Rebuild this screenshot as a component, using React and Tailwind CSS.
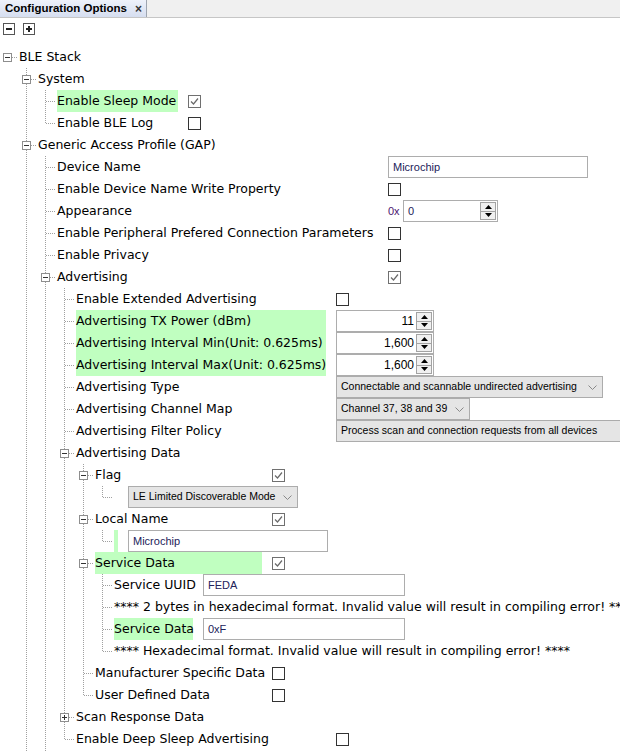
import React from 'react';

const LABEL = "font-['DejaVu_Sans',sans-serif] text-[12.5px] text-black";
const FIELD = "font-['Liberation_Sans',Arial,sans-serif] text-[11px] text-[#22225a]";
const COMBO = "font-['Liberation_Sans',Arial,sans-serif] text-[10.5px] text-black";

// one 19px indent cell of the tree, drawn as dotted connectors
function Conn({ type }) {
  const dot = { stroke: '#a0a0a0', strokeWidth: 1, strokeDasharray: '1 1' };
  return (
    <svg width="19" height="22" className="shrink-0 block">
      {type === 'l' && <line x1="7.5" y1="0" x2="7.5" y2="22" {...dot} />}
      {type === 't' && (
        <>
          <line x1="7.5" y1="0" x2="7.5" y2="22" {...dot} />
          <line x1="8" y1="11.5" x2="18" y2="11.5" {...dot} />
        </>
      )}
      {type === 'c' && (
        <>
          <line x1="7.5" y1="0" x2="7.5" y2="12" {...dot} />
          <line x1="8" y1="11.5" x2="18" y2="11.5" {...dot} />
        </>
      )}
      {(type === 'm' || type === 'p' || type === 'root') && (
        <>
          {type !== 'root' && <line x1="7.5" y1="0" x2="7.5" y2="7" {...dot} />}
          {type !== 'root' && <line x1="7.5" y1="16" x2="7.5" y2="22" {...dot} />}
          <line x1="12" y1="11.5" x2="18" y2="11.5" {...dot} />
          <rect x="3.5" y="7.5" width="8" height="8" fill="#fff" stroke="#8e8e8e" />
          <line x1="5" y1="11.5" x2="10" y2="11.5" stroke="#333" />
          {type === 'p' && <line x1="7.5" y1="9" x2="7.5" y2="14" stroke="#333" />}
        </>
      )}
    </svg>
  );
}

function Check({ on }) {
  return (
    <div className={`w-[13px] h-[13px] bg-white border ${on ? 'border-[#707070]' : 'border-[#333]'}`}>
      {on && (
        <svg width="11" height="11" className="block">
          <polyline points="2,5.5 4.5,8 9,2.5" fill="none" stroke="#6a6a6a" strokeWidth="1.2" />
        </svg>
      )}
    </div>
  );
}

function TextBox({ w, value }) {
  return (
    <div className={`${w} h-[22px] border border-[#adadad] bg-white flex items-center pl-[4px] ${FIELD}`}>
      {value}
    </div>
  );
}

function Arrows() {
  return (
    <div className="w-[16px] h-[18px] mr-[1px] flex flex-col border border-[#a3a3a3] bg-[#f0f0f0]">
      <div className="flex-1 flex items-center justify-center border-b border-[#a3a3a3]">
        <svg width="7" height="4" className="block"><polygon points="3.5,0 7,4 0,4" fill="#000" /></svg>
      </div>
      <div className="flex-1 flex items-center justify-center">
        <svg width="7" height="4" className="block"><polygon points="0,0 7,0 3.5,4" fill="#000" /></svg>
      </div>
    </div>
  );
}

function Spin({ w, value, right }) {
  return (
    <div className={`${w} h-[22px] border border-[#adadad] bg-white flex items-center`}>
      <span
        className={`flex-1 pl-[4px] pr-[2px] ${
          right
            ? "text-right font-['Liberation_Sans',Arial,sans-serif] text-[12px] text-black"
            : FIELD
        }`}
      >
        {value}
      </span>
      <Arrows />
    </div>
  );
}

function Combo({ w, value }) {
  return (
    <div className={`${w} h-[22px] shrink-0 border border-[#acacac] bg-[#e5e5e5] flex items-center pl-[4px] pr-[5px] ${COMBO}`}>
      <span className="flex-1 whitespace-nowrap">{value}</span>
      <svg width="9" height="5" className="block shrink-0">
        <polyline points="0.5,0.5 4.5,4.5 8.5,0.5" fill="none" stroke="#888" />
      </svg>
    </div>
  );
}

const E = 'e', L = 'l';

const rows = [
  { a: [], o: 'root', t: 'BLE Stack' },
  { a: [E], o: 'm', t: 'System' },
  { a: [E, L], o: 't', t: 'Enable Sleep Mode', w: 'w-[121px]', g: true, v: <Check on /> },
  { a: [E, L], o: 'c', t: 'Enable BLE Log', w: 'w-[121px]', v: <Check /> },
  { a: [E], o: 'm', t: 'Generic Access Profile (GAP)' },
  { a: [E, L], o: 't', t: 'Device Name', w: 'w-[321px]', v: <TextBox w="w-[200px]" value="Microchip" /> },
  { a: [E, L], o: 't', t: 'Enable Device Name Write Property', w: 'w-[321px]', v: <Check /> },
  {
    a: [E, L], o: 't', t: 'Appearance', w: 'w-[321px]',
    v: (
      <div className="flex items-center">
        <span className="w-[15px] font-['Liberation_Sans',sans-serif] text-[11px] text-[#4b1470]">0x</span>
        <Spin w="w-[95px]" value="0" />
      </div>
    ),
  },
  { a: [E, L], o: 't', t: 'Enable Peripheral Prefered Connection Parameters', w: 'w-[321px]', v: <Check /> },
  { a: [E, L], o: 't', t: 'Enable Privacy', w: 'w-[321px]', v: <Check /> },
  { a: [E, L], o: 'm', t: 'Advertising', w: 'w-[321px]', v: <Check on /> },
  { a: [E, L, L], o: 't', t: 'Enable Extended Advertising', w: 'w-[250px]', v: <Check /> },
  { a: [E, L, L], o: 't', t: 'Advertising TX Power (dBm)', w: 'w-[250px]', g: true, v: <Spin w="w-[98px]" value="11" right /> },
  { a: [E, L, L], o: 't', t: 'Advertising Interval Min(Unit: 0.625ms)', w: 'w-[250px]', g: true, v: <Spin w="w-[98px]" value="1,600" right /> },
  { a: [E, L, L], o: 't', t: 'Advertising Interval Max(Unit: 0.625ms)', w: 'w-[250px]', g: true, v: <Spin w="w-[98px]" value="1,600" right /> },
  { a: [E, L, L], o: 't', t: 'Advertising Type', w: 'w-[250px]', v: <Combo w="w-[267px]" value="Connectable and scannable undirected advertising" /> },
  { a: [E, L, L], o: 't', t: 'Advertising Channel Map', w: 'w-[250px]', v: <Combo w="w-[134px]" value="Channel 37, 38 and 39" /> },
  { a: [E, L, L], o: 't', t: 'Advertising Filter Policy', w: 'w-[250px]', v: <Combo w="w-[320px]" value="Process scan and connection requests from all devices" /> },
  { a: [E, L, L], o: 'm', t: 'Advertising Data' },
  { a: [E, L, L, L], o: 'm', t: 'Flag', w: 'w-[167px]', v: <Check on /> },
  { a: [E, L, L, L, L], o: 'c', t: '', w: 'w-[4px]', v: <Combo w="w-[170px]" value="LE Limited Discoverable Mode" /> },
  { a: [E, L, L, L], o: 'm', t: 'Local Name', w: 'w-[167px]', v: <Check on /> },
  { a: [E, L, L, L, L], o: 'c', t: '', w: 'w-[4px]', g: true, v: <TextBox w="w-[200px]" value="Microchip" /> },
  { a: [E, L, L, L], o: 'm', t: 'Service Data', w: 'w-[167px]', g: true, v: <Check on /> },
  { a: [E, L, L, L, L], o: 't', t: 'Service UUID', w: 'w-[79px]', v: <TextBox w="w-[202px]" value="FEDA" /> },
  { a: [E, L, L, L, L], o: 't', t: '**** 2 bytes in hexadecimal format. Invalid value will result in compiling error! ****' },
  { a: [E, L, L, L, L], o: 't', t: 'Service Data', w: 'w-[79px]', g: true, v: <TextBox w="w-[202px]" value="0xF" /> },
  { a: [E, L, L, L, L], o: 'c', t: '**** Hexadecimal format. Invalid value will result in compiling error! ****' },
  { a: [E, L, L, L], o: 't', t: 'Manufacturer Specific Data', w: 'w-[167px]', v: <Check /> },
  { a: [E, L, L, L], o: 'c', t: 'User Defined Data', w: 'w-[167px]', v: <Check /> },
  { a: [E, L, L], o: 'p', t: 'Scan Response Data' },
  { a: [E, L, L], o: 'c', t: 'Enable Deep Sleep Advertising', w: 'w-[250px]', v: <Check /> },
  { a: [E, L], o: 'l', t: '' },
];

function TreeRow({ row }) {
  return (
    <div className="flex h-[22px] items-center">
      {row.a.map((c, i) => (
        <Conn key={i} type={c} />
      ))}
      <Conn type={row.o} />
      <div className={`h-full shrink-0 flex items-center whitespace-nowrap ${row.w || ''} ${row.g ? 'bg-[#c0ffc0]' : ''} ${LABEL}`}>
        {row.t}
      </div>
      {row.v && <div className="ml-[10px] shrink-0 flex items-center">{row.v}</div>}
    </div>
  );
}

export default function App() {
  return (
    <div className="w-[620px] h-[751px] overflow-hidden bg-white">
      {/* tab strip */}
      <div className="flex h-[18px] bg-[#f0f0f0] border-b border-[#c6c6c6]">
        <div className="w-[147px] flex items-center pl-[5px] bg-linear-to-b from-[#eef2fb] to-[#d6def0] border-r border-[#9ea5b0]">
          <span className="font-['Liberation_Sans',Arial,sans-serif] font-bold text-[11.5px] text-black">Configuration Options</span>
          <span className="ml-[8px] font-['Liberation_Sans',Arial,sans-serif] font-bold text-[12px] text-[#333] leading-none">×</span>
        </div>
      </div>

      {/* toolbar */}
      <div className="h-[28px] flex items-start gap-[8px] pl-[3px] pt-[5px]">
        <svg width="12" height="12" className="block">
          <rect x="0.5" y="0.5" width="11" height="11" fill="#fff" stroke="#555" />
          <line x1="3" y1="6" x2="9" y2="6" stroke="#222" strokeWidth="2" />
        </svg>
        <svg width="12" height="12" className="block">
          <rect x="0.5" y="0.5" width="11" height="11" fill="#fff" stroke="#555" />
          <line x1="3" y1="6" x2="9" y2="6" stroke="#222" strokeWidth="2" />
          <line x1="6" y1="3" x2="6" y2="9" stroke="#222" strokeWidth="2" />
        </svg>
      </div>

      {/* tree */}
      <div className="flex flex-col">
        {rows.map((r, i) => (
          <TreeRow key={i} row={r} />
        ))}
      </div>
    </div>
  );
}
